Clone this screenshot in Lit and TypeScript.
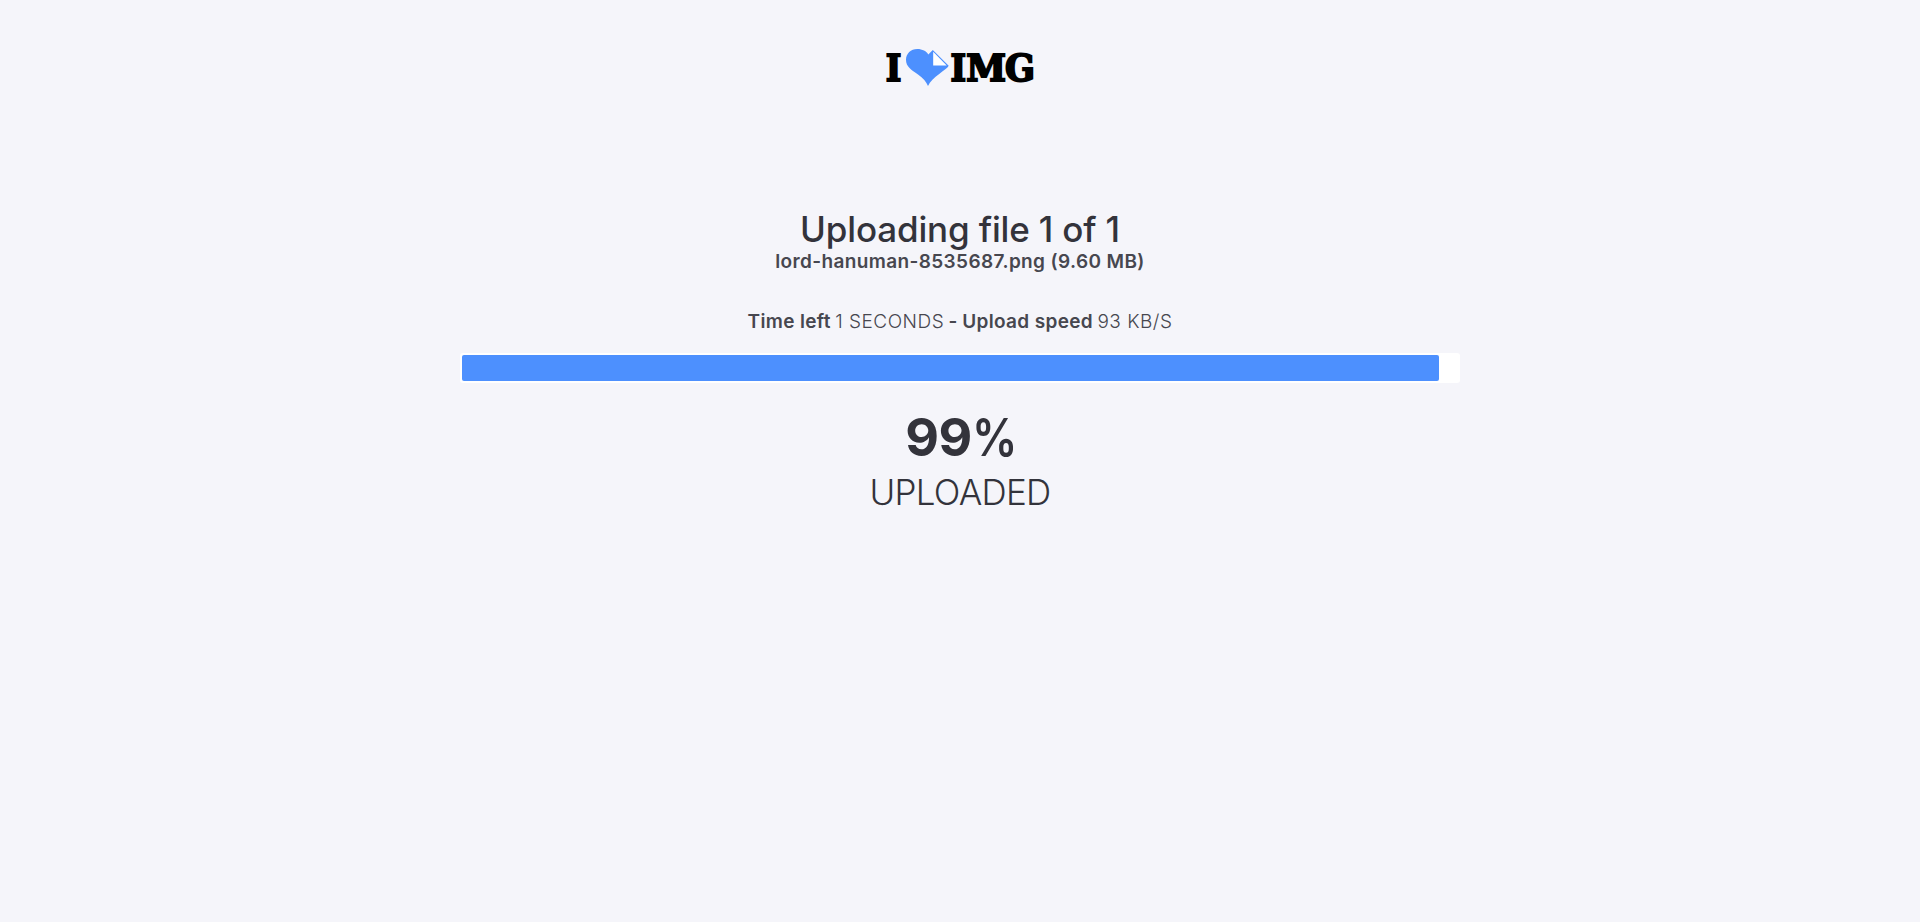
import { LitElement, html, css } from "lit";
import { customElement, property } from "lit/decorators.js";

@customElement("brand-logo")
export class BrandLogo extends LitElement {
  static styles = css`
    :host { display: block; width: 152px; height: 54px; }
    svg { display: block; overflow: visible; }
    .letter {
      font: bold 37px "DejaVu Serif", serif;
      fill: #000;
      stroke: #000;
      stroke-width: 2px;
    }
    .heart { fill: #4d90fe; }
    .fold { fill: #fff; }
  `;

  render() {
    return html`
      <svg width="152" height="54" viewBox="884 40 152 54" role="img" aria-label="I love IMG">
        <text class="letter" x="885.8" y="81.3" textLength="15.6" lengthAdjust="spacingAndGlyphs">I</text>
        <path class="heart" d="M917.3 49c5 0 9.300 2.300 11 5.400L932.800 50l15.900 15.700c-1.500 2.600-5.200 4.800-9.500 8.200-5 3.900-9.300 7.300-11.200 12.100-1.700-4.400-4.800-7.800-10-11.600-6.500-4.400-12-7.400-12-14.600 0-6.200 4.800-10.800 11.300-10.800z" />
        <path class="fold" d="M933.200 51.800V65.600H946.700z" />
        <text class="letter" x="950.4" y="81.3" textLength="15.6" lengthAdjust="spacingAndGlyphs">I</text>
        <text class="letter" x="966.2" y="81.3" textLength="39.8" lengthAdjust="spacingAndGlyphs">M</text>
        <text class="letter" x="1005" y="81.3" textLength="30" lengthAdjust="spacingAndGlyphs">G</text>
      </svg>
    `;
  }
}

@customElement("progress-bar")
export class ProgressBar extends LitElement {
  @property({ type: Number }) value = 0;

  static styles = css`
    :host {
      display: block;
      box-sizing: border-box;
      width: 1000px;
      height: 30px;
      padding: 2px;
      border-radius: 3px;
      background: #fff;
    }
    .fill { height: 100%; border-radius: 2px; background: #4d90fe; }
  `;

  render() {
    return html`<div class="fill" style="width: ${this.value}%"></div>`;
  }
}

@customElement("app-root")
export class AppRoot extends LitElement {
  @property({ type: Number }) percent = 99;

  static styles = css`
    :host {
      display: flex;
      flex-direction: column;
      align-items: center;
      box-sizing: border-box;
      min-height: 100vh;
      padding-top: 40px;
      background: #f5f5fa;
      color: #33333b;
      font-family: Inter, sans-serif;
      white-space: nowrap;
    }
    .title {
      margin: 114px 0 0;
      font-size: 35px;
      font-weight: 500;
      line-height: 42px;
      letter-spacing: -0.16px;
    }
    .file {
      font-size: 19px;
      font-weight: 600;
      line-height: 24px;
      letter-spacing: 0.38px;
      color: #47474f;
    }
    .stats {
      display: flex;
      gap: 4.4px;
      margin-top: 36px;
      font-size: 19px;
      line-height: 24px;
      color: #47474f;
    }
    .label { font-weight: 600; letter-spacing: 0.34px; }
    .value { font-weight: 300; letter-spacing: 0.5px; }
    progress-bar { margin-top: 19px; }
    .percent {
      display: flex;
      margin-top: 24px;
      font-size: 52px;
      font-weight: 700;
      line-height: 62px;
      letter-spacing: -0.6px;
    }
    .sign {
      width: 43px;
      font-weight: 600;
      letter-spacing: 0;
      transform: scaleX(0.87);
      transform-origin: left;
    }
    .caption {
      margin-top: -1px;
      font-size: 35px;
      font-weight: 300;
      line-height: 48px;
      letter-spacing: -0.72px;
    }
  `;

  render() {
    return html`
      <brand-logo></brand-logo>
      <h1 class="title">Uploading file 1 of 1</h1>
      <div class="file">lord-hanuman-8535687.png (9.60 MB)</div>
      <div class="stats">
        <span class="label">Time left</span>
        <span class="value">1 SECONDS</span>
        <span class="label">-</span>
        <span class="label">Upload speed</span>
        <span class="value">93 KB/S</span>
      </div>
      <progress-bar .value=${98.1}></progress-bar>
      <div class="percent"><span>${this.percent}</span><span class="sign">%</span></div>
      <div class="caption">UPLOADED</div>
    `;
  }
}
